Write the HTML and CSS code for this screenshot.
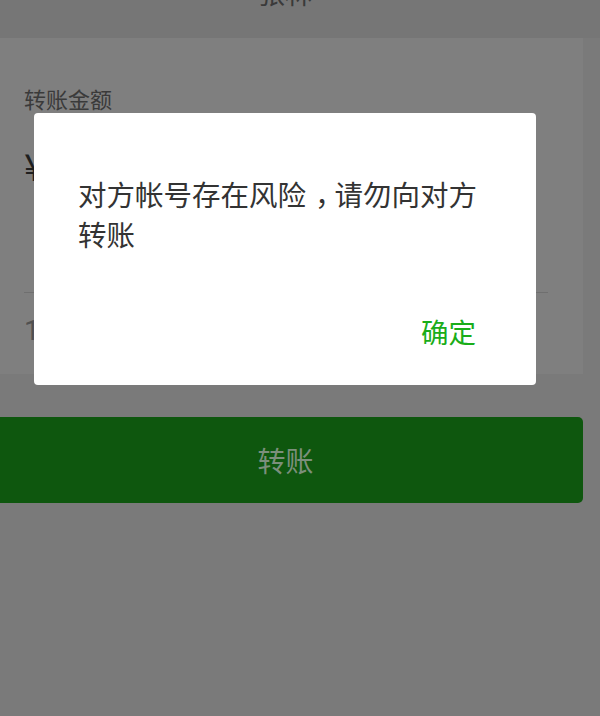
FILE: index.html
```html
<!DOCTYPE html>
<html lang="zh">
<head>
<meta charset="utf-8">
<link rel="stylesheet" href="styles.css">
</head>
<body>
<div class="screen">
  <div class="header"><div class="title">张林</div></div>
  <div class="card">
    <div class="label">转账金额</div>
    <div class="amount">¥</div>
    <div class="divider"></div>
    <div class="note">1</div>
  </div>
  <div class="btn-row"><div class="btn">转账</div></div>

  <div class="dialog">
    <div class="dialog-text">对方帐号存在风险<span class="punct">，</span>请勿向对方转账</div>
    <div class="dialog-actions"><span class="ok">确定</span></div>
  </div>
</div>
</body>
</html>
```
FILE: styles.css
```css
html, body {
  margin: 0;
  padding: 0;
}
body {
  background: #7a7a7a;
  font-family: "Noto Sans CJK SC", "Noto Sans", sans-serif;
}
.screen {
  position: relative;
  width: 600px;
  height: 716px;
  overflow: hidden;
  background: #7a7a7a;
}
.header {
  height: 38px;
  background: #767676;
  overflow: hidden;
  display: flex;
  justify-content: center;
}
.title {
  margin-top: -22px;
  margin-left: -30px;
  font-size: 27px;
  line-height: 30px;
  color: #3a3a3a;
}
.card {
  width: 583px;
  height: 336px;
  box-sizing: border-box;
  padding: 40px 35px 0 24px;
  background: #7f7f7f;
  display: flex;
  flex-direction: column;
}
.label {
  font-size: 22px;
  line-height: 40px;
  color: #3a3a3a;
}
.amount {
  margin-top: 22px;
  font-size: 38px;
  line-height: 50px;
  color: #1f1f1f;
}
.divider {
  margin-top: 102px;
  height: 1px;
  background: #6f6f6f;
}
.note {
  margin-top: 18px;
  font-family: "Roboto", "Noto Sans", sans-serif;
  font-size: 28px;
  line-height: 40px;
  color: #505050;
}
.btn-row {
  padding-top: 43px;
}
.btn {
  width: 583px;
  height: 86px;
  background: #0e570e;
  border-radius: 0 5px 5px 0;
  display: flex;
  align-items: center;
  justify-content: center;
  font-size: 28px;
  color: #7c8f7c;
  padding-right: 12px;
  box-sizing: border-box;
}
.dialog {
  position: absolute;
  left: 34px;
  top: 113px;
  width: 502px;
  height: 272px;
  background: #ffffff;
  border-radius: 4px;
  box-sizing: border-box;
  padding: 61px 44px 0 44px;
  display: flex;
  flex-direction: column;
}
.dialog-text {
  font-size: 28.5px;
  line-height: 40px;
  color: #333333;
}
.punct {
  margin-left: 9px;
  margin-right: -9px;
}
.dialog-actions {
  margin-top: 57px;
  display: flex;
  justify-content: flex-end;
  padding-right: 16px;
}
.ok {
  font-size: 27.5px;
  line-height: 40px;
  color: #1aad19;
}
```
